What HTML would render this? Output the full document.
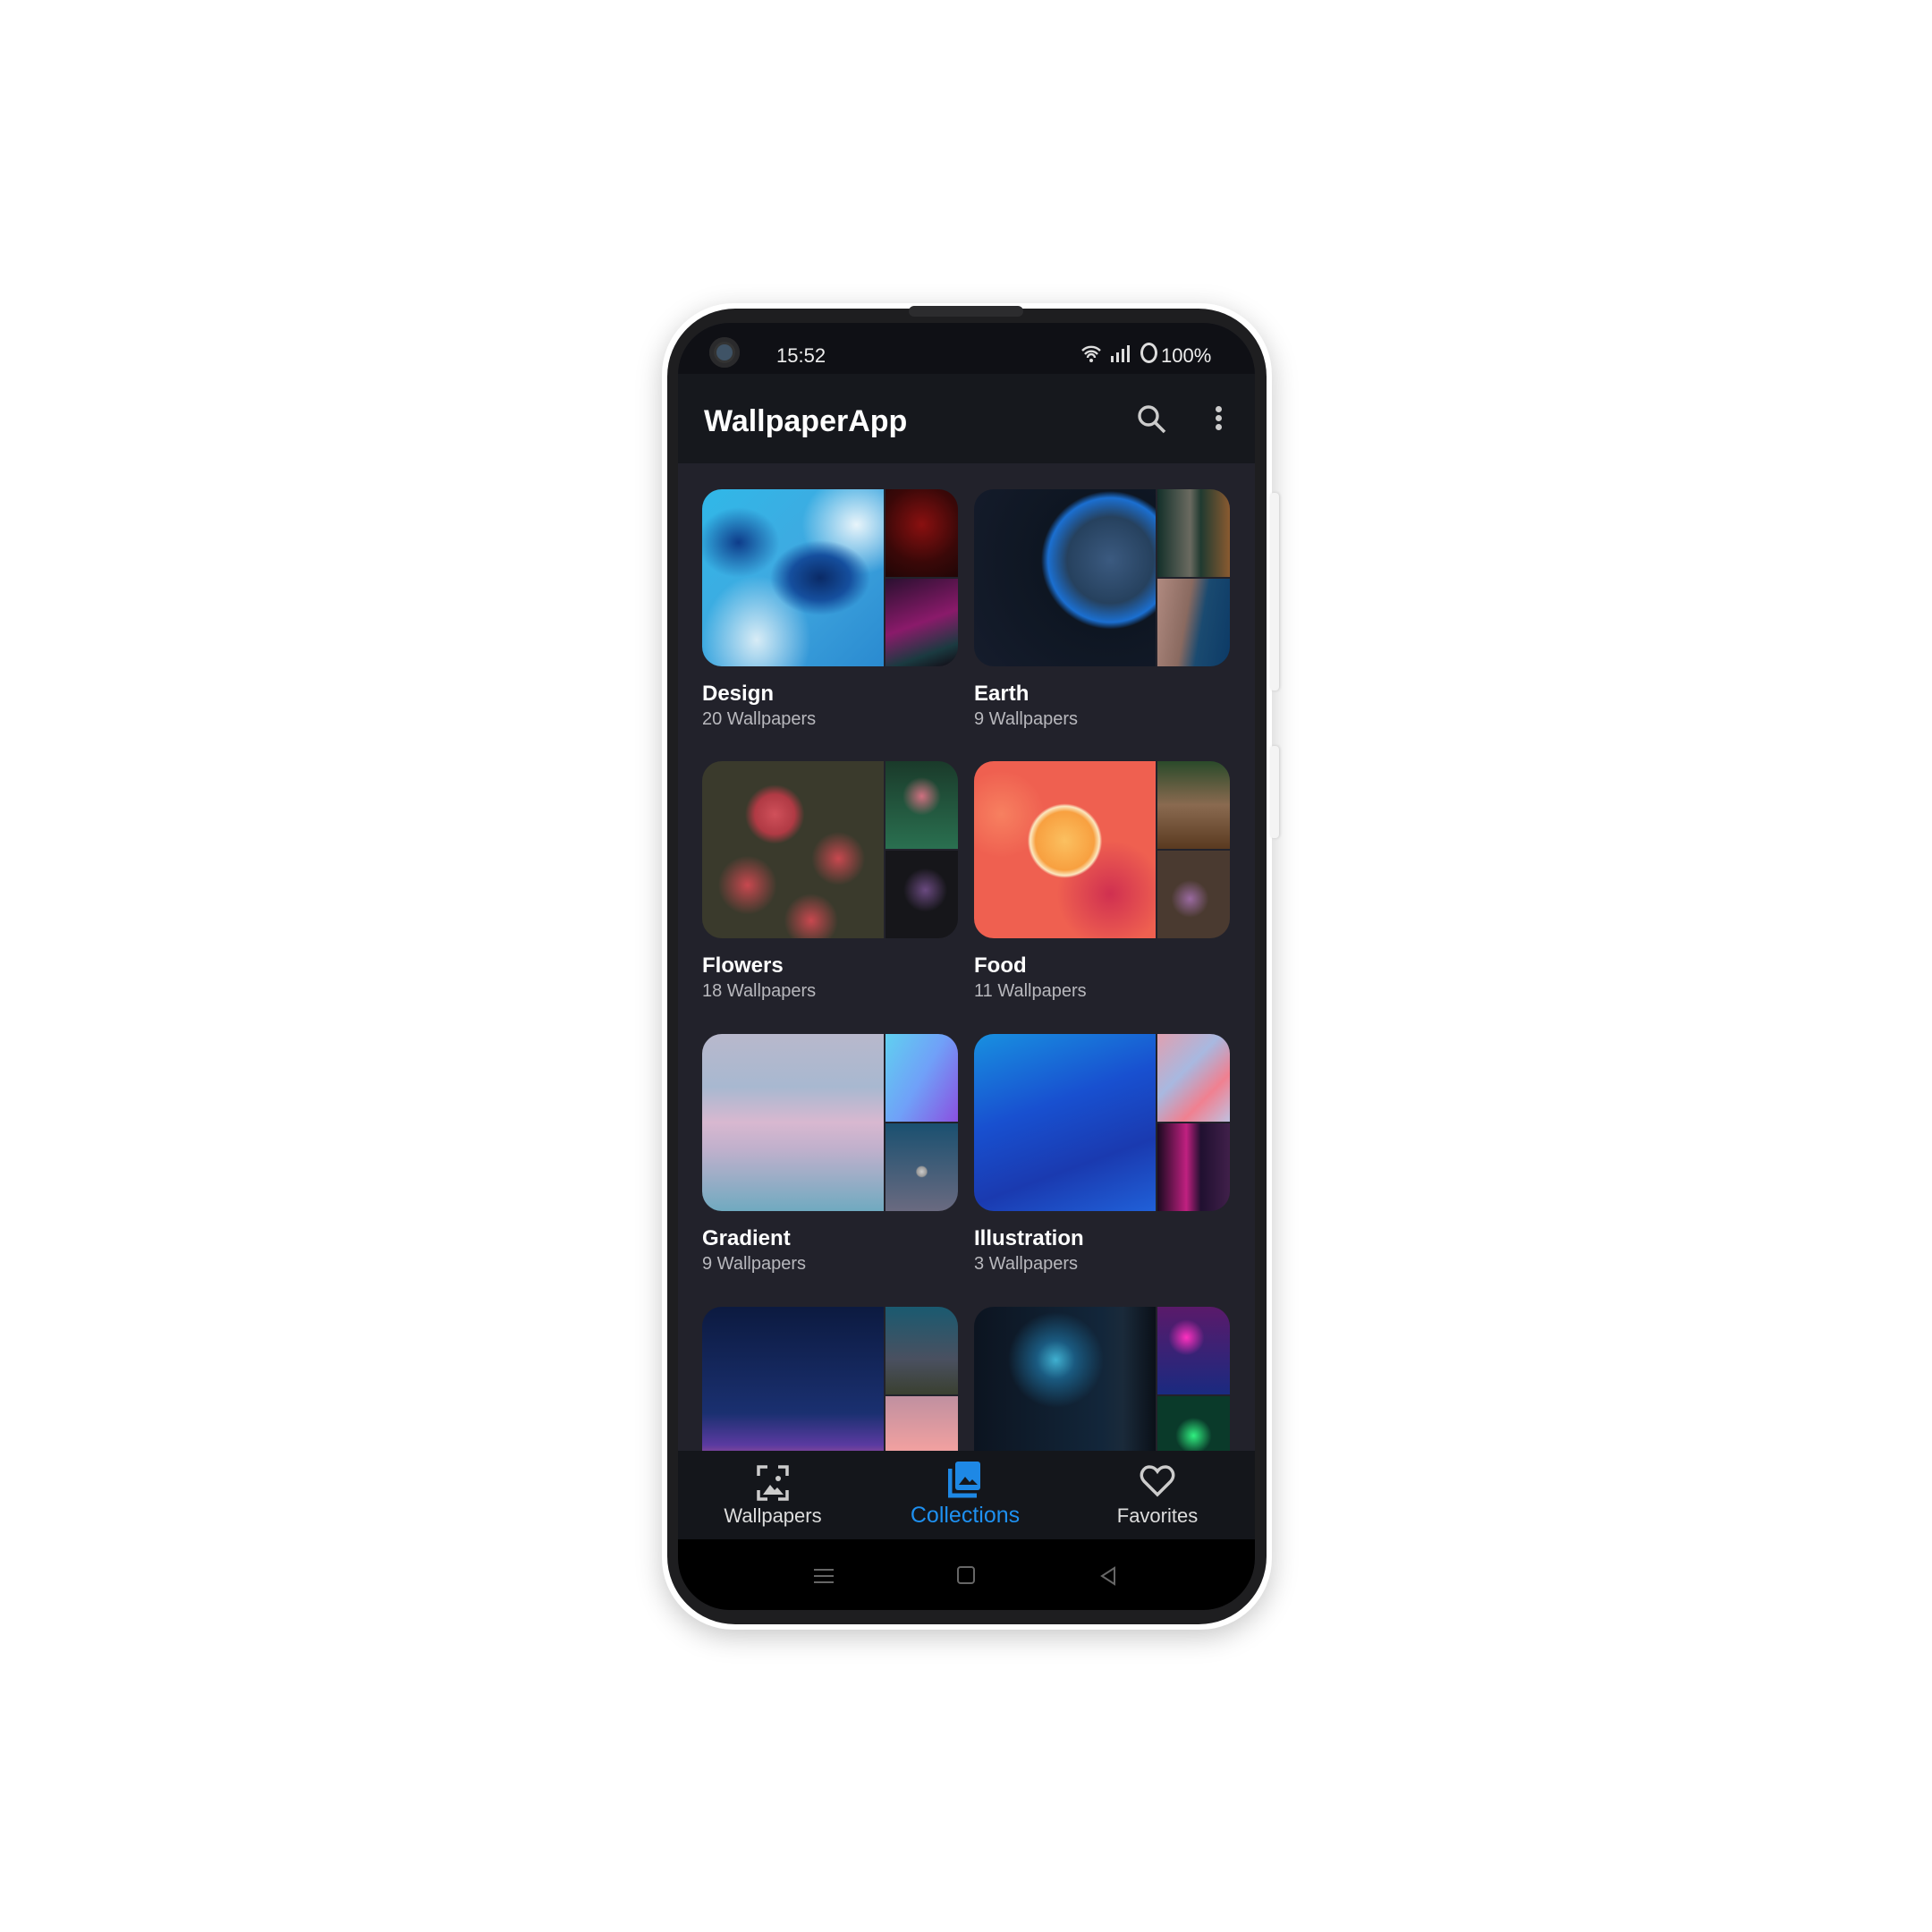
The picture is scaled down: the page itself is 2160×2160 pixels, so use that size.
<!DOCTYPE html>
<html><head><meta charset="utf-8"><style>
*{margin:0;padding:0;box-sizing:border-box}
body{width:2160px;height:2160px;background:#fff;position:relative;overflow:hidden;font-family:"Liberation Sans",sans-serif}
.phone{position:absolute;left:740px;top:339px;width:682px;height:1483px;border-radius:80px;background:#fff;box-shadow:0 8px 30px rgba(0,0,0,.22);}
.frame{position:absolute;left:746px;top:345px;width:670px;height:1471px;border-radius:76px;background:#1e1e20}
.btn{position:absolute;left:1420px;width:10px;background:#f4f4f4;border-radius:4px;box-shadow:1px 0 3px rgba(0,0,0,.15)}
.screen{position:absolute;left:758px;top:361px;width:645px;height:1439px;border-radius:58px;overflow:hidden;background:#22222b}
.status{position:absolute;left:0;top:0;width:100%;height:57px;background:#0f1015}
.appbar{position:absolute;left:0;top:57px;width:100%;height:100px;background:#16181d}
.card{position:absolute;width:286px;height:198px;border-radius:22px;overflow:hidden}
.main{position:absolute;left:0;top:0;width:203px;height:198px}
.s1{position:absolute;left:205px;top:0;width:81px;height:98px}
.s2{position:absolute;left:205px;top:100px;width:81px;height:98px}
.t{position:absolute;color:#fff;font-size:24px;font-weight:bold}
.st{position:absolute;color:#b8b8bd;font-size:20px}
.nav{position:absolute;left:0;top:1261px;width:100%;height:100px;background:#14161b}
.sys{position:absolute;left:0;top:1360px;width:100%;height:80px;background:#000}
.lbl{position:absolute;font-size:22px;color:#ddd;text-align:center;width:200px}
</style></head><body>
<div class="phone"></div>
<div class="frame"></div>
<div style="position:absolute;left:1016px;top:342px;width:128px;height:12px;border-radius:6px;background:#2c2c2e"></div>
<div class="btn" style="top:551px;height:221px"></div>
<div class="btn" style="top:834px;height:103px"></div>
<div class="screen">
 <div class="status">
  <div style="position:absolute;left:35px;top:16px;width:34px;height:34px;border-radius:50%;background:#333;box-shadow:inset 0 0 0 5px #2a2a2c"><div style="position:absolute;left:8px;top:8px;width:18px;height:18px;border-radius:50%;background:#3f5366"></div></div>
  <div style="position:absolute;left:110px;top:24px;color:#eee;font-size:22px">15:52</div>
  <svg style="position:absolute;left:450px;top:22px" width="60" height="24" viewBox="0 0 60 24"><path d="M2 9a14 14 0 0 1 20 0M5 13a9 9 0 0 1 14 0M8 17a4 4 0 0 1 8 0" stroke="#ddd" stroke-width="2.4" fill="none"/><circle cx="12" cy="20" r="2" fill="#ddd"/><rect x="34" y="15" width="3" height="7" fill="#ddd"/><rect x="40" y="11" width="3" height="11" fill="#ddd"/><rect x="46" y="7" width="3" height="15" fill="#ddd"/><rect x="52" y="3" width="3" height="19" fill="#ddd"/></svg>
  <div style="position:absolute;left:517px;top:22px;width:19px;height:23px;border:3px solid #ddd;border-radius:50%"></div>
  <div style="position:absolute;left:540px;top:24px;color:#eee;font-size:22px">100%</div>
 </div>
 <div class="appbar">
  <div style="position:absolute;left:29px;top:34px;color:#fff;font-size:34px;font-weight:bold">WallpaperApp</div>
  <svg style="position:absolute;left:512px;top:33px" width="36" height="36" viewBox="0 0 36 36"><circle cx="14" cy="14" r="10" stroke="#ccc" stroke-width="3.4" fill="none"/><path d="M21 21l11 11" stroke="#ccc" stroke-width="3.6"/></svg>
  <div style="position:absolute;left:601px;top:36px;width:7px;height:7px;border-radius:50%;background:#ccc;box-shadow:0 10px 0 #ccc,0 20px 0 #ccc"></div>
 </div>

 <div class="card" style="left:27px;top:186px">
  <div class="main" style="background:radial-gradient(ellipse at 65% 50%,#0a2a66 0,#154f9e 18%,transparent 30%),radial-gradient(ellipse at 85% 20%,#e8f4fa 0,transparent 25%),radial-gradient(ellipse at 30% 85%,#d8ecf6 0,transparent 30%),radial-gradient(ellipse at 20% 30%,#0e3c8a 0,transparent 20%),linear-gradient(135deg,#30b8e8,#40a8e0 50%,#2a8ad0)"></div>
  <div class="s1" style="background:radial-gradient(circle at 50% 40%,#8a1010,#3a0808 60%,#200606)"></div>
  <div class="s2" style="background:linear-gradient(160deg,#2a1030,#8a1a6a 50%,#1a3a40 80%,#120812)"></div>
 </div>
 <div class="card" style="left:331px;top:186px">
  <div class="main" style="background:radial-gradient(circle at 75% 40%,#3b5a80 0,#26415e 25%,#1b6fd0 36%,#0e1622 40%,#151c2c 100%)"></div>
  <div class="s1" style="background:linear-gradient(90deg,#14302a,#6a6a60 45%,#203a30 60%,#8a5a30)"></div>
  <div class="s2" style="background:linear-gradient(100deg,#b08a80 0,#8a6a60 40%,#1a4a70 60%,#0c3a66)"></div>
 </div>
 <div class="t" style="left:27px;top:401px">Design</div>
 <div class="st" style="left:27px;top:432px">20 Wallpapers</div>
 <div class="t" style="left:331px;top:401px">Earth</div>
 <div class="st" style="left:331px;top:432px">9 Wallpapers</div>

 <div class="card" style="left:27px;top:490px">
  <div class="main" style="background:radial-gradient(circle at 40% 30%,#d0505a 0,#b03a44 12%,transparent 18%),radial-gradient(circle at 75% 55%,#c8484f 0,transparent 16%),radial-gradient(circle at 25% 70%,#c8484f 0,transparent 16%),radial-gradient(circle at 60% 90%,#c8484f 0,transparent 14%),#3a3a2c"></div>
  <div class="s1" style="background:radial-gradient(circle at 50% 40%,#d07080 0,transparent 30%),linear-gradient(#1a3a2a,#2a7050)"></div>
  <div class="s2" style="background:radial-gradient(circle at 55% 45%,#6a4a80 0,transparent 35%),#16161a"></div>
 </div>
 <div class="card" style="left:331px;top:490px">
  <div class="main" style="background:radial-gradient(circle at 50% 45%,#fbc060 0,#f8a040 22%,#fbe8c0 26%,transparent 28%),radial-gradient(circle at 15% 30%,#f78060 0,transparent 22%),radial-gradient(circle at 75% 75%,#d03050 0,transparent 28%),#ef6050"></div>
  <div class="s1" style="background:linear-gradient(#2a4a2a,#8a6a50 50%,#5a3a20)"></div>
  <div class="s2" style="background:radial-gradient(circle at 45% 55%,#9a6aa0 0,transparent 30%),#4a3a30"></div>
 </div>
 <div class="t" style="left:27px;top:705px">Flowers</div>
 <div class="st" style="left:27px;top:736px">18 Wallpapers</div>
 <div class="t" style="left:331px;top:705px">Food</div>
 <div class="st" style="left:331px;top:736px">11 Wallpapers</div>

 <div class="card" style="left:27px;top:795px">
  <div class="main" style="background:linear-gradient(#b8b8cc 0,#a8b8d0 30%,#d8b8d0 50%,#c0b0cc 65%,#70aac0 100%)"></div>
  <div class="s1" style="background:linear-gradient(120deg,#60d0f0,#70a0f8 50%,#8a50e0)"></div>
  <div class="s2" style="background:radial-gradient(circle at 50% 55%,#ccc 0,#999 8%,transparent 10%),linear-gradient(#1a5070,#6a6a80)"></div>
 </div>
 <div class="card" style="left:331px;top:795px">
  <div class="main" style="background:linear-gradient(160deg,#1890e0,#1850d0 40%,#1a3ab0 70%,#2060d8)"></div>
  <div class="s1" style="background:linear-gradient(135deg,#e0a0b0,#a8b8e0 40%,#f08090 70%,#c0c0e0)"></div>
  <div class="s2" style="background:linear-gradient(90deg,#1a0a20,#c02080 40%,#201030 60%,#40204a)"></div>
 </div>
 <div class="t" style="left:27px;top:1010px">Gradient</div>
 <div class="st" style="left:27px;top:1041px">9 Wallpapers</div>
 <div class="t" style="left:331px;top:1010px">Illustration</div>
 <div class="st" style="left:331px;top:1041px">3 Wallpapers</div>

 <div class="card" style="left:27px;top:1100px;height:198px">
  <div class="main" style="background:linear-gradient(#0c1a40,#1a3070 60%,#5a3aa0 78%,#c05a90 90%,#402a50)"></div>
  <div class="s1" style="background:linear-gradient(#1a5a70,#4a5060 60%,#3a4030)"></div>
  <div class="s2" style="background:linear-gradient(#c090a0,#f0a0a0 60%,#a0a0b0)"></div>
 </div>
 <div class="card" style="left:331px;top:1100px;height:198px">
  <div class="main" style="background:radial-gradient(circle at 45% 30%,#40b0d0 0,#1a5a80 12%,transparent 30%),linear-gradient(90deg,#0c1420,#12263a 70%,#1a2a3a 82%,#0a1018)"></div>
  <div class="s1" style="background:radial-gradient(circle at 40% 35%,#ff30c0 0,transparent 25%),linear-gradient(#5a1a6a,#1a2a80)"></div>
  <div class="s2" style="background:radial-gradient(circle at 50% 45%,#30f080 0,transparent 30%),#0a3a2a"></div>
 </div>

 <div class="nav">
  <svg style="position:absolute;left:88px;top:16px" width="36" height="40" viewBox="0 0 36 40"><path d="M2 12V2h10M24 2h10v10M2 28v10h10M24 38h10V28" stroke="#ccc" stroke-width="3.5" fill="none"/><circle cx="24" cy="15" r="3" fill="#ccc"/><path d="M7 33l8-11 5 6 3-3 7 8z" fill="#ccc"/></svg>
  <svg style="position:absolute;left:302px;top:12px" width="38" height="42" viewBox="0 0 38 42"><rect x="8" y="0" width="28" height="32" rx="3" fill="#1e88e5"/><path d="M2 8v30h30" stroke="#1e88e5" stroke-width="5" fill="none"/><path d="M12 26l7-9 5 6 3-3 6 6z" fill="#14161b"/></svg>
  <svg style="position:absolute;left:516px;top:16px" width="40" height="36" viewBox="0 0 40 36"><path d="M20 33L5 18C-1 11 4 2 11 2c4 0 7 2 9 5 2-3 5-5 9-5 7 0 12 9 6 16z" stroke="#ccc" stroke-width="3.5" fill="none"/></svg>
  <div class="lbl" style="left:6px;top:60px">Wallpapers</div>
  <div class="lbl" style="left:221px;top:58px;color:#1e90f0;font-size:25px">Collections</div>
  <div class="lbl" style="left:436px;top:60px">Favorites</div>
 </div>
 <div class="sys">
  <div style="position:absolute;left:152px;top:33px;width:22px;height:16px;border-top:2px solid #666;border-bottom:2px solid #666"><div style="margin-top:5px;height:2px;background:#666"></div></div>
  <div style="position:absolute;left:312px;top:30px;width:20px;height:20px;border:2px solid #666;border-radius:4px"></div>
  <svg style="position:absolute;left:470px;top:30px" width="22" height="22" viewBox="0 0 22 22"><path d="M18 2L4 11l14 9z" stroke="#666" stroke-width="2" fill="none"/></svg>
 </div>
</div>
</body></html>
